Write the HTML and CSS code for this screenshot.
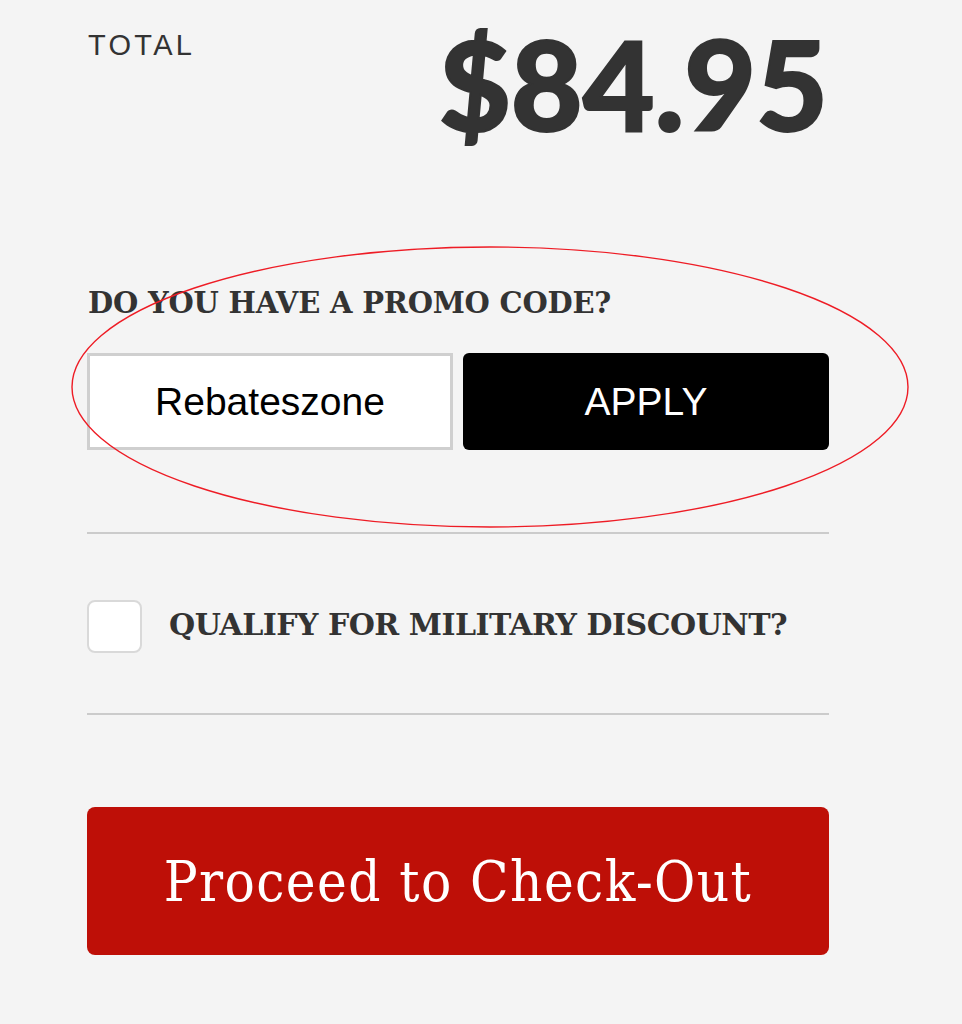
FILE: index.html
```html
<!DOCTYPE html>
<html lang="en">
<head>
<meta charset="utf-8">
<title>Cart total</title>
<link rel="stylesheet" href="styles.css">
</head>
<body>
<div class="summary">
  <div class="total-row">
    <div class="total-label">TOTAL</div>
    <div class="total-price">$84.95</div>
  </div>

  <div class="promo-label">DO YOU HAVE A PROMO CODE?</div>
  <div class="promo-row">
    <input class="promo-input" type="text" value="Rebateszone">
    <button class="apply-btn" type="button">APPLY</button>
  </div>

  <div class="divider divider-first"></div>

  <label class="military-row">
    <span class="checkbox"></span>
    <span class="military-label">QUALIFY FOR MILITARY DISCOUNT?</span>
  </label>

  <div class="divider divider-second"></div>

  <button class="checkout-btn" type="button">Proceed to Check-Out</button>

  <svg class="annotation" width="900" height="300" viewBox="0 0 900 300" aria-hidden="true">
    <ellipse cx="449" cy="149" rx="418" ry="140" fill="none" stroke="#ee1c25" stroke-width="1.4"/>
  </svg>
</div>
</body>
</html>
```

FILE: styles.css
```css
html, body {
  margin: 0;
  padding: 0;
  background: #f4f4f4;
}

body {
  font-family: "Liberation Sans", Arial, sans-serif;
  color: #333;
  height: 1024px;
  overflow: hidden;
}

.summary {
  position: relative;
  width: 742px;
  margin-left: 87px;
}

.total-row {
  display: flex;
  justify-content: space-between;
  align-items: flex-start;
  height: 150px;
}

.total-label {
  margin-top: 31px;
  margin-left: 1px;
  font-family: "Liberation Sans", Arial, sans-serif;
  font-size: 29px;
  line-height: 29px;
  letter-spacing: 3.3px;
  color: #333;
}

.total-price {
  margin-top: 21px;
  margin-right: 1px;
  font-family: "Lato Black", "Lato Heavy", Lato, "Liberation Sans", sans-serif;
  font-weight: 900;
  font-size: 124px;
  line-height: 125px;
  letter-spacing: 0;
  color: #333;
  -webkit-text-stroke: 2px #333;
}

.promo-label {
  margin-top: 139px;
  margin-left: 1px;
  font-family: "DejaVu Serif", serif;
  font-weight: bold;
  font-size: 29px;
  line-height: 29px;
  letter-spacing: -0.2px;
  color: #333;
  white-space: nowrap;
}

.promo-row {
  display: flex;
  gap: 10px;
  margin-top: 35px;
  height: 97px;
}

.promo-input {
  box-sizing: border-box;
  width: 366px;
  height: 97px;
  margin: 0;
  padding: 0;
  border: 3px solid #cfcfcf;
  background: #fff;
  font-family: "Liberation Sans", Arial, sans-serif;
  font-size: 39px;
  color: #000;
  text-align: center;
  outline: none;
}

.apply-btn {
  flex: 1;
  height: 97px;
  margin: 0;
  padding: 0;
  border: none;
  border-radius: 6px;
  background: #000;
  color: #fff;
  font-family: "Liberation Sans", Arial, sans-serif;
  font-size: 39px;
  cursor: pointer;
}

.divider {
  height: 2px;
  background: #cbcbcb;
}

.divider-first {
  margin-top: 82px;
}

.military-row {
  display: flex;
  align-items: center;
  gap: 27px;
  margin-top: 66px;
  height: 53px;
}

.checkbox {
  box-sizing: border-box;
  width: 55px;
  height: 53px;
  border: 2px solid #d9d9d9;
  border-radius: 8px;
  background: #fff;
  flex: none;
}

.military-label {
  font-family: "DejaVu Serif", serif;
  font-weight: bold;
  font-size: 30px;
  line-height: 30px;
  letter-spacing: -0.5px;
  color: #333;
  white-space: nowrap;
  margin-top: -4px;
}

.divider-second {
  margin-top: 60px;
}

.checkout-btn {
  display: block;
  width: 100%;
  height: 148px;
  margin-top: 92px;
  padding: 0;
  border: none;
  border-radius: 8px;
  background: #be0f07;
  color: #fff;
  font-family: "DejaVu Serif Condensed", "DejaVu Serif", serif;
  font-size: 56px;
  letter-spacing: 1.4px;
  cursor: pointer;
}

.annotation {
  position: absolute;
  left: -46px;
  top: 238px;
  pointer-events: none;
}
```
